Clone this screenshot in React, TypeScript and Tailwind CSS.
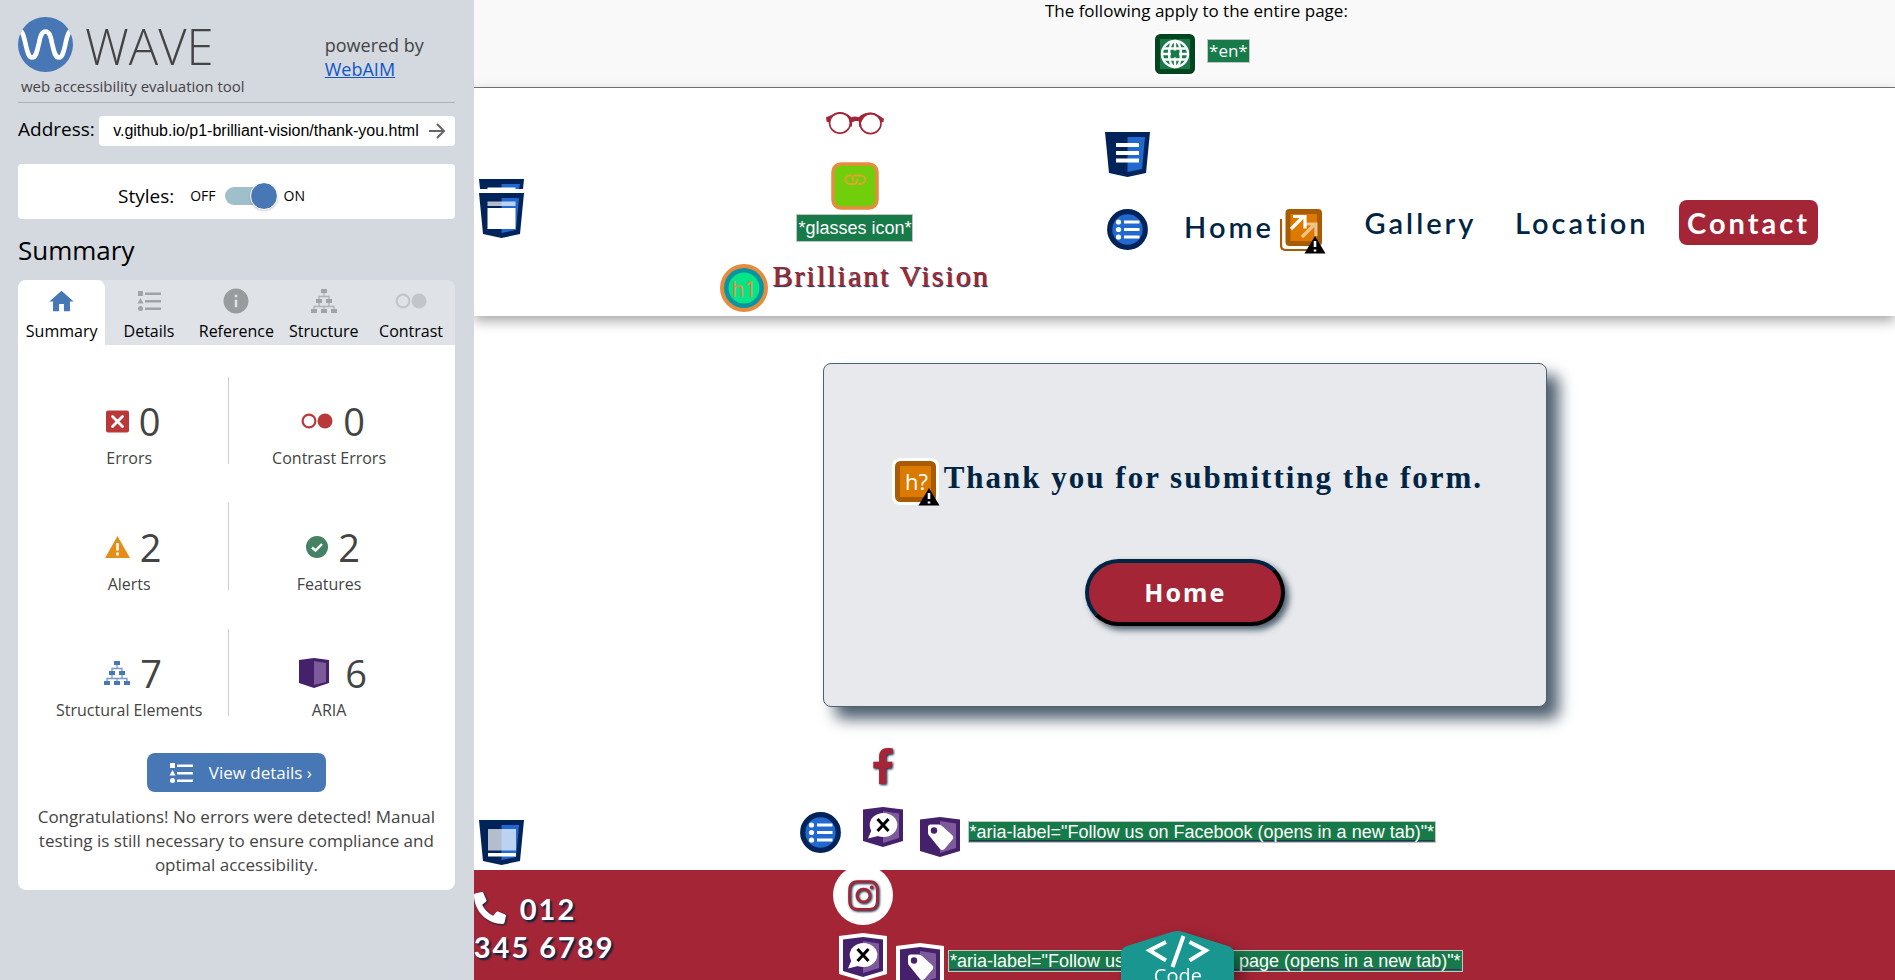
import type { ReactNode } from "react";
import { FaFacebookF, FaInstagram, FaPhoneAlt } from "react-icons/fa";
import { MdHome, MdInfo } from "react-icons/md";

function WaveLogo() {
  return (
    <svg className="size-[55px]" viewBox="0 0 55 55" aria-hidden="true">
      <defs>
        <clipPath id="disc">
          <circle cx="27.5" cy="27.5" r="27.5" />
        </clipPath>
      </defs>
      <circle cx="27.5" cy="27.5" r="27.5" fill="#4877b6" />
      <path
        d="M-1 12 C5 13 6 20 8 29 C10 37 11 40.500 14 40.500 C18 40.500 19 35 21 26 C22.500 18 24 14.500 27.500 14.500 C31 14.500 32.500 18 34 26 C36 35 37 40.500 41 40.500 C44 40.500 45 37 47 29 C49 20 50 13 56 12"
        fill="none"
        stroke="#fff"
        strokeWidth="4.600"
        clipPath="url(#disc)"
      />
    </svg>
  );
}

function ListGlyph() {
  return (
    <svg className="h-5 w-6" viewBox="0 0 24 20" fill="currentColor" aria-hidden="true">
      <path d="M1 0h5v5H1zM3.500 7 6.500 12.500H.5zM8 1.500h16v2.500H8zM8 9h16v2.500H8zM8 16.500h16V19H8z" />
      <circle cx="3.500" cy="17.500" r="2.500" />
    </svg>
  );
}

function TreeGlyph() {
  return (
    <svg className="size-[26px]" viewBox="0 0 26 24" aria-hidden="true">
      <path
        d="M13 3v4M8 11V7.500h10V11M8 13v4M18 13v4M3 21v-3.500h20V21M13 21v-3.500"
        fill="none"
        stroke="currentColor"
        strokeOpacity=".75"
        strokeWidth="1.300"
      />
      <path
        d="M10 0h6v4h-6zM5 10h6v4H5zM15 10h6v4h-6zM0 20h6v4H0zM10 20h6v4h-6zM20 20h6v4h-6z"
        fill="currentColor"
      />
    </svg>
  );
}

function ContrastGlyph() {
  return (
    <svg className="h-4 w-8" viewBox="0 0 32 16" aria-hidden="true">
      <circle cx="8" cy="8" r="6.400" fill="none" stroke="currentColor" strokeWidth="2.200" />
      <circle cx="24" cy="8" r="7.500" fill="currentColor" />
    </svg>
  );
}

function ErrorGlyph() {
  return (
    <svg className="size-[23px]" viewBox="0 0 23 22" aria-hidden="true">
      <rect width="23" height="22" rx="2" fill="#bb3839" />
      <path d="m6.500 6 10 10m0-10-10 10" stroke="#fff" strokeWidth="2.800" strokeLinecap="round" />
    </svg>
  );
}

function AlertGlyph() {
  return (
    <svg className="h-[22px] w-[25px]" viewBox="0 0 25 22" aria-hidden="true">
      <path d="M12.500 0 25 22H0z" fill="#e58e17" />
      <path d="M12.500 7v7.500M12.500 16.500v3" stroke="#fff" strokeWidth="2.600" />
    </svg>
  );
}

function FeatureGlyph() {
  return (
    <svg className="size-[22px]" viewBox="0 0 22 22" aria-hidden="true">
      <circle cx="11" cy="11" r="11" fill="#458265" />
      <path d="m6 11.500 3.500 3 6.500-6.500" fill="none" stroke="#fff" strokeWidth="2.400" />
    </svg>
  );
}

function AriaGlyph() {
  return (
    <svg className="mr-[6px] size-[30px]" viewBox="0 0 30 30" aria-hidden="true">
      <path d="m0 2 15-2 15 2v23l-15 5-15-5z" fill="#46216b" />
      <path d="m15 3 12 2v19l-12 3z" fill="#7d5a9c" />
    </svg>
  );
}

function WarnCorner({ x, y }: { x: number; y: number }) {
  return (
    <g transform={`translate(${x} ${y})`}>
      <path d="M10.500 0 21 17.500H0z" />
      <path d="M10.500 5v6M10.500 13.500v2" stroke="#fff" strokeWidth="2.600" />
    </g>
  );
}

function GlobeMark() {
  return (
    <svg className="size-[46px] shrink-0" viewBox="0 0 46 46" role="img" aria-label="Language">
      <rect width="46" height="46" rx="8" fill="#fff" />
      <rect x="5.500" y="5.500" width="35" height="35" rx="3" fill="#177a49" stroke="#01461f" strokeWidth="5" />
      <g fill="none" stroke="#fff" strokeWidth="2.400">
        <circle cx="23" cy="23" r="13" />
        <ellipse cx="23" cy="23" rx="6" ry="13" />
        <path d="M23 10v26M10 23h26M12 17.500h22M12 28.500h22" />
      </g>
      <path d="M19 19.500h8v7h-8z" fill="#177a49" />
    </svg>
  );
}

function ShieldMark({ kind }: { kind: "nav" | "footer" }) {
  return (
    <svg className="size-[45px] shrink-0" viewBox="0 0 45 45" role="img" aria-label={kind}>
      <path d="M0 0h45l-4 41-18.500 4L4 41z" fill="#002359" />
      <path d="M22.500 5H40l-3 32-14.500 3z" fill="#2169cf" />
      {kind === "nav" ? (
        <path d="M11 11h23v4H11zM11 19h23v4H11zM11 26.500h23v4H11z" fill="#fff" />
      ) : (
        <>
          <path d="M9 9h28v21.500H9z" fill="#fff" fillOpacity=".7" />
          <path d="M9 33h28v3.500H9z" fill="#fff" />
        </>
      )}
    </svg>
  );
}

function HeaderMark() {
  return (
    <svg className="h-[59px] w-[45px] shrink-0" viewBox="0 0 45 59" role="img" aria-label="header">
      <path d="M0 0h45l-1 10H1zM0 14h45l-4 41-18.500 4L4 55z" fill="#002359" />
      <path d="M22.500 5H41l-1 5H22.500zM22.500 19H40l-3 32-14.500 3z" fill="#2169cf" />
      <path d="M8.500 22.500h28V27h-28z" fill="#fff" fillOpacity=".7" />
      <path d="M8.500 8.500h28V10h-28zM8.500 29h28v21h-28z" fill="#fff" />
    </svg>
  );
}

function ListMark() {
  return (
    <svg className="size-[41px] shrink-0" viewBox="0 0 41 41" role="img" aria-label="list">
      <circle cx="20.500" cy="20.500" r="17.800" fill="#2169cf" stroke="#002359" strokeWidth="5.200" />
      <g fill="#fff">
        <circle cx="11.500" cy="13" r="2.600" />
        <circle cx="11.500" cy="20.500" r="2.600" />
        <circle cx="11.500" cy="28" r="2.600" />
        <path d="M17 11.500h15.500v3H17zM17 19h15.500v3H17zM17 26.500h15.500v3H17z" />
      </g>
    </svg>
  );
}

function LinkedImageMark() {
  return (
    <svg className="size-[48px]" viewBox="0 0 48 48" role="img" aria-label="linked image">
      <rect x="2" y="2" width="44" height="44" rx="8" fill="#70cf0a" stroke="#e68c3e" strokeWidth="3.500" />
      <path
        d="M20.500 13.500h-1c-7 0-7 8.500 0 8.500h3.500c3.500 0 4-3.500 2.500-5M27.500 22h1.500c7 0 7-8.500 0-8.500h-4c-4 0-4.500 3.500-2.500 5.500"
        fill="none"
        stroke="#e8a030"
        strokeWidth="1.800"
      />
    </svg>
  );
}

function HeadingOneMark() {
  return (
    <svg className="size-[48px] shrink-0" viewBox="0 0 48 48" role="img" aria-label="heading level 1">
      <circle cx="24" cy="24" r="24" fill="#e68c3e" />
      <circle cx="24" cy="24" r="20" fill="#0a93a1" />
      <circle cx="24" cy="24" r="15.500" fill="#06e487" />
      <text x="24" y="33" textAnchor="middle" fontFamily="Open Sans, sans-serif" fontSize="21" fill="#e68c3e">
        h1
      </text>
    </svg>
  );
}

function NewTabMark() {
  return (
    <svg className="h-[45px] w-[46px] shrink-0" viewBox="0 0 46 45" role="img" aria-label="link opens a new tab">
      <path d="M1 10v26q0 5 5 5h32" fill="none" stroke="#a85b00" strokeWidth="2.200" />
      <rect x="8" y="2.500" width="31.500" height="32" rx="1.500" fill="#dc7a00" stroke="#a85b00" strokeWidth="5" />
      <g fill="none" strokeWidth="3.200" stroke="#fff">
        <path d="m22 28 13-13M24 15h12v12" strokeOpacity=".55" />
        <path d="m11 20 13-13M13 7.500h12v12" />
      </g>
      <WarnCorner x={24.5} y={27} />
    </svg>
  );
}

function PossibleHeadingMark() {
  return (
    <svg className="size-[48px] shrink-0" viewBox="0 0 48 48" role="img" aria-label="possible heading">
      <rect width="47" height="47" rx="8" fill="#fff" />
      <rect x="5.500" y="5.500" width="36" height="36" rx="3" fill="#dc7a00" stroke="#a85b00" strokeWidth="5" />
      <text x="24.500" y="32" textAnchor="middle" fontFamily="Open Sans, sans-serif" fontSize="22" fill="#fff">
        h?
      </text>
      <WarnCorner x={26.5} y={30} />
    </svg>
  );
}

function AriaMark({ kind, outlined = false }: { kind: "hidden" | "label"; outlined?: boolean }) {
  return (
    <svg className="size-[48px] shrink-0" viewBox="-4 -4 48 48" role="img" aria-label={`aria ${kind}`}>
      {outlined && <path d="m-4-1 24-3 24 3v38l-24 7-24-7z" fill="#fff" />}
      <path d="m0 2.500 20-2.500 20 2.500V34l-20 6-20-6z" fill="#46216b" />
      <path d="m20 4 16 2.500V31l-16 5z" fill="#7d5a9c" />
      {kind === "hidden" ? (
        <>
          <ellipse cx="20.500" cy="18" rx="13.800" ry="12" fill="#fff" />
          <path d="m9 22-4 9.500 12-3z" fill="#fff" />
          <path d="m14.500 12 11 12m0-12-11 12" stroke="#000" strokeWidth="3" />
        </>
      ) : (
        <>
          <path d="M8 10q0-2.500 2.500-2.500H19q1.500 0 3 1.500l9.500 8.500q3 2.500 1 5l-8 9.500q-2.500 2-4.500 0L9.500 19Q8 17.500 8 16z" fill="#fff" />
          <circle cx="14" cy="13.500" r="3.200" fill="#46216b" />
        </>
      )}
    </svg>
  );
}

function Glasses() {
  return (
    <svg className="h-[23px] w-[58px]" viewBox="0 0 54 22" fill="none" stroke="#a42536" preserveAspectRatio="none" aria-hidden="true">
      <circle cx="13" cy="10.500" r="9.700" strokeWidth="1.500" />
      <circle cx="41.500" cy="11" r="9.700" strokeWidth="1.500" />
      <path d="M0 5C4 4 7 1 13 .500 18 .500 21 2 23.500 5c2-.8 4.500-.8 7 0C33 2 37 .500 41.500.800 47 1.500 50 4 54 6.500l-.5 3-2 .500C49 5 46 2.500 41.500 2.500c-4 0-6.500 3-9 7.500-2-2-6-2-8.500 0C22 5 19 2 13 2 8 2 5 5 3 10L.5 9z" fill="#a42536" stroke="none" />
      <path d="M22 6c1.500 2 1.700 4 1 8M33 6c-1.500 2-2 4-1 8" strokeWidth="2" />
    </svg>
  );
}

function CodeBadge() {
  return (
    <a
      href="#code"
      className="absolute bottom-0 left-1/2 flex h-[49px] w-[113px] -translate-x-[63px] flex-col items-center overflow-hidden text-white drop-shadow-[8px_8px_8px_rgba(0,0,0,0.4)]"
    >
      <svg className="absolute inset-0 h-[49px] w-[113px]" viewBox="0 0 113 49" aria-hidden="true">
        <path d="M0 49V22q0-5 6-7L49 1.500q7.500-3 15 0L107 15q6 2 6 7v27z" fill="#19968f" />
        <path d="M45 11 28.500 19.500 45 29.500M68.500 11l16.500 8.500-16.500 10M62.500 5l-11 31" fill="none" stroke="#fff" strokeWidth="4" />
      </svg>
      <span className="relative mt-[33px] font-['Open_Sans',sans-serif] text-xl leading-6">Code</span>
    </a>
  );
}

function Tag({ children, tall = false }: { children: ReactNode; tall?: boolean }) {
  return (
    <span
      className={`${
        tall ? "py-[3px]" : ""
      } whitespace-nowrap border border-[#c4c4c4] bg-[#177a49] px-px font-['Liberation_Sans',Arial,sans-serif] text-lg leading-5 text-white`}
    >
      {children}
    </span>
  );
}

const tabs: { label: string; icon: ReactNode; tone: string }[] = [
  { label: "Summary", icon: <MdHome className="size-[29px]" />, tone: "text-[#4877b6]" },
  { label: "Details", icon: <ListGlyph />, tone: "text-[#a0a3a7]" },
  { label: "Reference", icon: <MdInfo className="size-[30px]" />, tone: "text-[#999c9f]" },
  { label: "Structure", icon: <TreeGlyph />, tone: "text-[#a0a3a7]" },
  { label: "Contrast", icon: <ContrastGlyph />, tone: "text-[#c2c5c9]" },
];

const stats: { label: string; value: number; icon: ReactNode }[] = [
  { label: "Errors", value: 0, icon: <ErrorGlyph /> },
  {
    label: "Contrast Errors",
    value: 0,
    icon: (
      <span className="text-[#bb3839]">
        <ContrastGlyph />
      </span>
    ),
  },
  { label: "Alerts", value: 2, icon: <AlertGlyph /> },
  { label: "Features", value: 2, icon: <FeatureGlyph /> },
  {
    label: "Structural Elements",
    value: 7,
    icon: (
      <span className="text-[#4877b6]">
        <TreeGlyph />
      </span>
    ),
  },
  { label: "ARIA", value: 6, icon: <AriaGlyph /> },
];

function Sidebar() {
  return (
    <aside className="w-1/4 shrink-0 bg-[#d4d8df] pr-[19px] pl-[18px] font-['Open_Sans','Noto_Sans',sans-serif] text-[#444]">
      <div className="flex h-[103px] items-start justify-between border-b border-[#aeb2b6] pt-[17px]">
        <div>
          <div className="flex items-center gap-3">
            <WaveLogo />
            <span className="pt-[3px] text-[49px] leading-[52px] font-light">WAVE</span>
          </div>
          <p className="pl-[3px] text-[15px] leading-7">web accessibility evaluation tool</p>
        </div>
        <p className="w-[130px] pt-4 text-lg leading-6">
          powered by
          <br />
          <a href="#webaim" className="text-[#1257c9] underline">
            WebAIM
          </a>
        </p>
      </div>
      <form className="mt-[13px] flex items-center justify-between gap-1 text-black" onSubmit={(e) => e.preventDefault()}>
        <label htmlFor="address" className="pb-1 text-[19px] leading-6">
          Address:
        </label>
        <div className="flex h-[30px] min-w-0 flex-1 items-center rounded bg-white pr-2 pl-[6px]">
          <input
            id="address"
            type="text"
            defaultValue="v.github.io/p1-brilliant-vision/thank-you.html"
            className="min-w-0 flex-1 pr-2 text-right font-['Liberation_Sans',Arial,sans-serif] text-base outline-none"
          />
          <button type="submit" aria-label="Go" className="text-[#666]">
            <svg className="size-5" viewBox="0 0 20 20" fill="none" stroke="currentColor" strokeWidth="2" aria-hidden="true">
              <path d="M2 10h15M10 3l7 7-7 7" />
            </svg>
          </button>
        </div>
      </form>
      <div className="mt-[18px] flex h-[55px] items-center rounded bg-white pt-2 pl-[100px] text-black">
        <span className="text-[19px] leading-6">Styles:</span>
        <label className="ml-4 flex items-center text-sm">
          OFF
          <span className="relative mx-[9px] block h-[18px] w-[50px]">
            <input type="checkbox" defaultChecked aria-label="Styles" className="peer absolute inset-0 size-full appearance-none rounded-full bg-[#9fc0cb]" />
            <span className="pointer-events-none absolute -top-1 -left-1 size-[26px] rounded-full bg-[#4877b6] shadow-[0_1px_3px_rgba(0,0,0,0.4)] outline outline-white peer-checked:left-[26px]" />
          </span>
          ON
        </label>
      </div>
      <h2 className="mt-[13px] mb-3 text-[26px] leading-9 text-black">Summary</h2>
      <div role="tablist" className="flex h-[65px] rounded-t-lg bg-[#dfe2e7]">
        {tabs.map((tab, i) => (
          <button
            key={tab.label}
            type="button"
            role="tab"
            aria-selected={i === 0}
            className={`flex flex-1 basis-0 flex-col items-center pt-[5px] ${i === 0 ? "rounded-t-lg bg-white" : ""}`}
          >
            <span className={`flex h-8 items-center justify-center ${tab.tone}`}>{tab.icon}</span>
            <span className="text-base leading-7 text-black">{tab.label}</span>
          </button>
        ))}
      </div>
      <div className="rounded-b-lg bg-white pt-8 pb-[13px] text-center">
        <dl className="mr-[26px] ml-3 grid grid-cols-2 gap-y-[39px]">
          {stats.map((stat, i) => (
            <div
              key={stat.label}
              className={`flex h-[87px] flex-col-reverse justify-end ${i % 2 === 0 ? "border-r border-[#ccc]" : ""}`}
            >
              <dt className="mt-px text-base leading-6">{stat.label}</dt>
              <dd className="mt-5 flex items-center justify-center gap-[10px] pl-2">
                {stat.icon}
                <span className="text-[38px] leading-[48px]">{stat.value}</span>
              </dd>
            </div>
          ))}
        </dl>
        <button
          type="button"
          className="mt-[37px] inline-flex h-[39px] items-center gap-4 rounded-lg bg-[#4877b6] pr-[14px] pl-[22px] text-[17px] text-white"
        >
          <ListGlyph />
          View details ›
        </button>
        <p className="mt-[13px] px-2 text-[17px] leading-6">
          Congratulations! No errors were detected! Manual testing is still necessary to ensure compliance and optimal
          accessibility.
        </p>
      </div>
    </aside>
  );
}

function SiteHeader() {
  return (
    <header className="relative flex h-[228px] shrink-0 bg-white shadow-[0_5px_12px_rgba(0,0,0,0.35)]">
      <div className="flex w-[44%] shrink-0 items-start pl-[5px]">
        <div className="pt-[91px]">
          <HeaderMark />
        </div>
        <div className="flex flex-1 flex-col items-center pt-6 pl-[87px]">
          <Glasses />
          <div className="mt-[27px]">
            <LinkedImageMark />
          </div>
          <div className="mt-1 flex">
            <Tag tall>*glasses icon*</Tag>
          </div>
          <div className="mt-[22px] flex gap-1">
            <HeadingOneMark />
            <h1 className="font-['Liberation_Serif',serif] text-[30px] leading-6 tracking-[2px] text-[#a42536] [text-shadow:1px_1px_1px_#002443]">
              Brilliant Vision
            </h1>
          </div>
        </div>
      </div>
      <nav className="flex-1 pt-11 pr-[77px] pl-[6px] font-[Lato,sans-serif] text-[29px] leading-[45px] font-semibold tracking-[3px] text-[#002443]">
        <ShieldMark kind="nav" />
        <div className="mt-[23px] flex items-start pl-[2px]">
          <div className="mt-[9px]">
            <ListMark />
          </div>
          <ul className="flex flex-1 items-start justify-between pl-9">
            <li className="mt-1 flex items-start gap-[6px]">
              <a href="#home">Home</a>
              <span className="pt-[5px]">
                <NewTabMark />
              </span>
            </li>
            <li>
              <a href="#gallery">Gallery</a>
            </li>
            <li>
              <a href="#location">Location</a>
            </li>
            <li className="-ml-2">
              <a href="#contact" className="block rounded-lg bg-[#a42536] px-2 font-bold text-white">
                Contact
              </a>
            </li>
          </ul>
        </div>
      </nav>
    </header>
  );
}

function SiteFooter() {
  return (
    <footer className="flex-1">
      <div className="flex h-[125px] items-end">
        <div className="w-[22.5%] pb-[5px] pl-[5px]">
          <ShieldMark kind="footer" />
        </div>
        <div className="flex h-[125px] items-start pl-[6px]">
          <div className="pt-[67px]">
            <ListMark />
          </div>
          <div className="ml-[18px] pt-[3px]">
            <FaFacebookF className="ml-1 h-[36px] w-[40px] text-[#a42536] drop-shadow-[1px_1px_1px_#002443]" />
            <div className="mt-[19px] flex items-start">
              <AriaMark kind="hidden" />
              <a href="#facebook" className="ml-[9px] flex items-start gap-1 pt-[10px]">
                <AriaMark kind="label" />
                <span className="flex pt-2 underline decoration-[#46216b] decoration-1 underline-offset-2">
                  <Tag>*aria-label="Follow us on Facebook (opens in a new tab)"*</Tag>
                </span>
              </a>
            </div>
          </div>
        </div>
      </div>
      <div className="flex h-[160px] bg-[#a42536]">
        <div className="w-[25.700%] pt-5">
          <p className="w-[160px] font-[Lato,sans-serif] text-[29px] leading-[38px] font-bold tracking-[2px] text-white [text-shadow:2px_2px_2px_#002443]">
            <FaPhoneAlt className="mr-[14px] inline size-8 align-[-4px] drop-shadow-[1px_1px_1px_#002443]" />
            012 345 6789
          </p>
        </div>
        <div>
          <a href="#instagram" aria-label="Instagram" className="-mt-[5px] -ml-[6px] flex size-[60px] items-center justify-center rounded-full bg-white">
            <FaInstagram className="size-[35px] text-[#a42536] drop-shadow-[1px_1px_1px_#002443]" />
          </a>
          <div className="mt-2 flex items-start">
            <AriaMark kind="hidden" outlined />
            <a href="#instagram" className="ml-[9px] flex items-start gap-1 pt-[10px]">
              <AriaMark kind="label" outlined />
              <span className="flex pt-[7px] underline decoration-[#46216b] decoration-1 underline-offset-2">
                <Tag>*aria-label="Follow us on Instagram page (opens in a new tab)"*</Tag>
              </span>
            </a>
          </div>
        </div>
      </div>
    </footer>
  );
}

export default function App() {
  return (
    <div className="flex h-screen overflow-hidden bg-white">
      <Sidebar />
      <div className="relative flex min-w-0 flex-1 flex-col overflow-hidden">
        <section className="flex h-[88px] shrink-0 flex-col items-center border-b border-[#777] bg-[#f9f9f9] pl-6 font-['Open_Sans',sans-serif] text-[17px] leading-[22px] text-black">
          <p>The following apply to the entire page:</p>
          <div className="mt-[9px] flex items-start gap-[9px] pl-[9px]">
            <GlobeMark />
            <span className="mt-2 border border-[#c4c4c4] bg-[#177a49] px-px text-white">*en*</span>
          </div>
        </section>
        <SiteHeader />
        <main className="flex h-[429px] shrink-0 flex-col items-center pt-[47px] pl-[2px]">
          <section className="flex h-[344px] w-[51%] flex-col items-center rounded-lg border border-[#4f6070] bg-[#e7e9ec] pt-[94px] shadow-[12px_12px_15px_#4f6070]">
            <div className="flex gap-1 pl-1">
              <PossibleHeadingMark />
              <p className="font-['Liberation_Serif',serif] text-[31px] leading-10 font-bold tracking-[2px] whitespace-nowrap text-[#002443]">
                Thank you for submitting the form.
              </p>
            </div>
            <button
              type="button"
              className="mt-[53px] h-[67px] w-[200px] rounded-full border-4 border-t-[#002443] border-r-black border-b-black border-l-[#002443] bg-[#a42536] font-['Noto_Sans',sans-serif] text-[25px] font-bold tracking-[2px] text-white shadow-[4px_4px_6px_#4f6070]"
            >
              Home
            </button>
          </section>
        </main>
        <SiteFooter />
        <CodeBadge />
      </div>
    </div>
  );
}
